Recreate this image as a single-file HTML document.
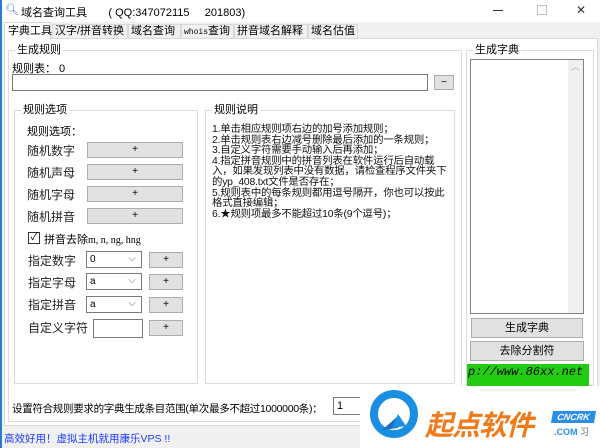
<!DOCTYPE html><html><head><meta charset="utf-8"><style>
*{box-sizing:border-box;margin:0;padding:0}
body{width:600px;height:448px;overflow:hidden;background:#f0f0f0;font-family:"Liberation Sans","Noto Sans CJK SC",sans-serif;font-size:11px;color:#000;position:relative}
.a{position:absolute;white-space:nowrap}
.grp{position:absolute;border:1px solid #dcdcdc}
.gl{position:absolute;top:-8px;left:6px;background:#fff;padding:0 2px;font-size:11px;line-height:14px}
.btn{position:absolute;background:#e1e1e1;border:1px solid #adadad;text-align:center;font-size:10px;line-height:13px}
.lbl{position:absolute;font-size:12px;color:#222;white-space:nowrap}
.cb{position:absolute;background:#fff;border:1px solid #7a7a7a;font-size:10px;padding-left:3px;line-height:15px}
.cb:after{content:"⌵";position:absolute;right:5px;top:-1px;color:#666;font-size:10px}
.tab{position:absolute;top:24px;height:15px;border:1px solid #d9d9d9;line-height:13px;padding-left:2px;white-space:nowrap;font-size:11px;overflow:hidden}
</style></head><body>
<div class="a" style="left:0;top:0;width:600px;height:22px;background:#fff;border-left:2px solid #2b7bd0"></div>
<div class="a" style="left:5px;top:3px;font-size:11px;color:#3a6fb0">🔍︎</div>
<div class="a" style="left:21px;top:4px;font-size:11px">域名查询工具&nbsp;&nbsp;&nbsp;&nbsp;&nbsp;&nbsp;&nbsp;( QQ:347072115&nbsp;&nbsp;&nbsp;&nbsp;&nbsp;201803)</div>
<div class="a" style="left:493px;top:10px;width:10px;height:1px;background:#333"></div>
<div class="a" style="left:537px;top:5px;width:10px;height:10px;border:1px solid #bbb"></div>
<div class="a" style="left:576px;top:3px;font-size:12px;color:#333">✕</div>
<div class="a" style="left:0;top:22px;width:2px;height:426px;background:#2b7bd0"></div>
<div class="a" style="left:4px;top:38px;width:594px;height:388px;background:#fff;border:1px solid #d9d9d9"></div>
<div class="a" style="left:4px;top:22px;width:47px;height:18px;background:#fff;border:1px solid #d9d9d9;border-bottom:none;padding-left:3px;line-height:16px;font-size:11px">字典工具</div>
<div class="tab" style="left:52px;width:76px">汉字/拼音转换</div>
<div class="tab" style="left:128px;width:53px">域名查询</div>
<div class="tab" style="left:181px;width:53px"><span style="font-family:'Liberation Mono';font-size:8px">whois</span>查询</div>
<div class="tab" style="left:234px;width:74px">拼音域名解释</div>
<div class="tab" style="left:308px;width:50px">域名估值</div>
<div class="grp" style="left:8px;top:50px;width:454px;height:372px"><div class="gl">生成规则</div></div>
<div class="a" style="left:12px;top:60px">规则表：&nbsp;0</div>
<div class="a" style="left:12px;top:74px;width:416px;height:17px;background:#fff;border:1px solid #7a7a7a"></div>
<div class="btn" style="left:434px;top:75px;width:20px;height:15px">−</div>
<div class="grp" style="left:14px;top:110px;width:184px;height:274px"><div class="gl">规则选项</div></div>
<div class="a" style="left:27px;top:123px">规则选项：</div>
<div class="lbl" style="left:27px;top:142px">随机数字</div><div class="btn" style="left:87px;top:142px;width:96px;height:16px">+</div>
<div class="lbl" style="left:27px;top:164px">随机声母</div><div class="btn" style="left:87px;top:164px;width:96px;height:16px">+</div>
<div class="lbl" style="left:27px;top:186px">随机字母</div><div class="btn" style="left:87px;top:186px;width:96px;height:16px">+</div>
<div class="lbl" style="left:27px;top:208px">随机拼音</div><div class="btn" style="left:87px;top:208px;width:96px;height:16px">+</div>
<div class="a" style="left:28px;top:232px;width:12px;height:12px;border:1px solid #333;font-size:10px;line-height:10px;text-align:center">✓</div>
<div class="a" style="left:44px;top:231px">拼音去除<span style="font-family:'Liberation Serif';font-size:10px">m, n, ng, hng</span></div>
<div class="lbl" style="left:28px;top:252px">指定数字</div><div class="cb" style="left:86px;top:251px;width:56px;height:17px">0</div><div class="btn" style="left:149px;top:252px;width:34px;height:16px">+</div>
<div class="lbl" style="left:28px;top:274px">指定字母</div><div class="cb" style="left:86px;top:273px;width:56px;height:17px">a</div><div class="btn" style="left:149px;top:274px;width:34px;height:16px">+</div>
<div class="lbl" style="left:28px;top:296px">指定拼音</div><div class="cb" style="left:86px;top:296px;width:56px;height:17px">a</div><div class="btn" style="left:149px;top:297px;width:34px;height:16px">+</div>
<div class="lbl" style="left:28px;top:319px">自定义字符</div><div class="a" style="left:93px;top:319px;width:50px;height:19px;background:#fff;border:1px solid #7a7a7a"></div><div class="btn" style="left:149px;top:320px;width:34px;height:16px">+</div>
<div class="grp" style="left:205px;top:110px;width:250px;height:274px"><div class="gl">规则说明</div></div>
<div class="a" style="left:212px;top:125px;width:240px;font-size:10.4px;line-height:10.6px;color:#111;white-space:normal;letter-spacing:-0.2px">1.单击相应规则项右边的加号添加规则；<br>2.单击规则表右边减号删除最后添加的一条规则；<br>3.自定义字符需要手动输入后再添加；<br>4.指定拼音规则中的拼音列表在软件运行后自动载入，如果发现列表中没有数据，请检查程序文件夹下的yp_408.txt文件是否存在；<br>5.规则表中的每条规则都用逗号隔开，你也可以按此格式直接编辑；<br>6.★规则项最多不能超过10条(9个逗号)；</div>
<div class="grp" style="left:466px;top:50px;width:128px;height:336px"><div class="gl">生成字典</div></div>
<div class="a" style="left:470px;top:59px;width:114px;height:255px;background:#fff;border:1px solid #828282"><div style="position:absolute;right:0;top:0;width:15px;height:253px;background:#f0f0f0;color:#aaa;font-size:9px;text-align:center">︿</div></div>
<div class="btn" style="left:471px;top:318px;width:112px;height:20px;font-size:11px;line-height:18px">生成字典</div>
<div class="btn" style="left:470px;top:341px;width:114px;height:20px;font-size:11px;line-height:18px">去除分割符</div>
<div class="a" style="left:467px;top:364px;width:122px;height:22px;background:#22cc11;font-family:'Liberation Mono';font-style:italic;font-size:12px;line-height:16px;padding-left:1px;overflow:hidden">p://www.86xx.net</div>
<div class="a" style="left:12px;top:401px;font-size:10.5px;letter-spacing:-0.3px">设置符合规则要求的字典生成条目范围(单次最多不超过1000000条)：</div>
<div class="a" style="left:333px;top:397px;width:30px;height:18px;background:#fff;border:1px solid #7a7a7a;font-size:11px;padding-left:3px;line-height:16px">1</div>
<div class="a" style="left:4px;top:431px;font-size:10.5px;color:#1a3bff">高效好用！虚拟主机就用康乐VPS !!</div>
<div class="a" style="left:360px;top:386px;width:240px;height:62px;background:#fff"></div>
<svg class="a" style="left:368px;top:390px" width="50" height="52" viewBox="0 0 50 52"><circle cx="26" cy="24" r="20" fill="none" stroke="#1a8ee0" stroke-width="8"/><path d="M14 40 L30 26 L30 38 Z" fill="#1a6fc0"/><path d="M30 24 l8 12 l-14 2z" fill="#1a8ee0"/></svg>
<div class="a" style="left:425px;top:404px;font-size:28px;font-weight:bold;color:#f07a1a;letter-spacing:-1px;font-style:italic">起点软件</div>
<div class="a" style="left:552px;top:411px;width:43px;height:12px;background:#2a8ee6;color:#fff;font-size:9px;font-weight:bold;text-align:center;line-height:12px;font-style:italic;transform:skewX(-10deg)">CNCRK</div>
<div class="a" style="left:554px;top:425px;font-size:9px;color:#2a8ee6;font-weight:bold">.COM <span style="color:#999">习</span></div>
</body></html>
